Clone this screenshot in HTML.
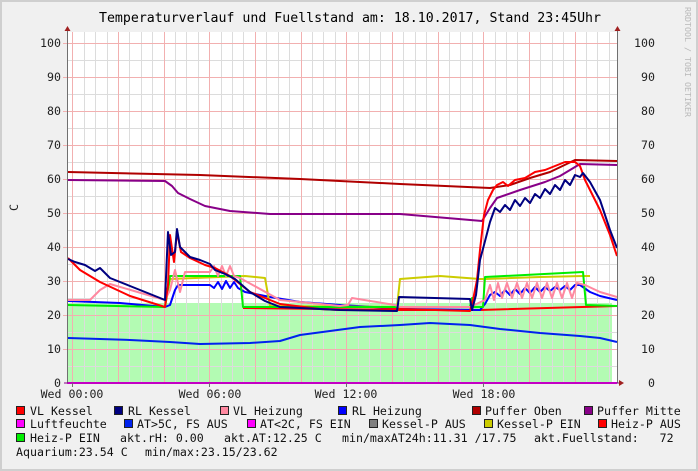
<!DOCTYPE html>
<html><head><meta charset="utf-8"><style>
html,body{margin:0;padding:0;background:#f0f0f0;}
svg{display:block;font-family:"DejaVu Sans Mono","Liberation Mono",monospace;}
</style></head><body>
<svg width="698" height="471" viewBox="0 0 698 471" xmlns="http://www.w3.org/2000/svg">
<rect x="0" y="0" width="698" height="471" fill="#f0f0f0"/>
<rect x="1" y="1" width="696" height="469" fill="none" stroke="#cfcfcf" stroke-width="2"/>
<text x="350" y="22" font-size="13.3" text-anchor="middle" fill="#000" textLength="502" lengthAdjust="spacingAndGlyphs">Temperaturverlauf und Fuellstand am: 18.10.2017, Stand 23:45Uhr</text>
<text transform="translate(685,7) rotate(90)" font-size="8" fill="#b8b8b8" textLength="110" lengthAdjust="spacingAndGlyphs">RRDTOOL / TOBI OETIKER</text>
<!-- plot -->
<rect x="67" y="32" width="550" height="351" fill="#ffffff"/>
<!-- green fill -->
<rect x="68" y="303" width="544" height="80" fill="#b3fbb3"/>
<g stroke="#dcdcdc" stroke-width="1" id="mg">
<path d="M84.5 32V383M95.5 32V383M107.5 32V383M129.5 32V383M141.5 32V383M152.5 32V383M175.5 32V383M186.5 32V383M198.5 32V383M221.5 32V383M232.5 32V383M243.5 32V383M266.5 32V383M278.5 32V383M289.5 32V383M312.5 32V383M323.5 32V383M335.5 32V383M358.5 32V383M369.5 32V383M380.5 32V383M403.5 32V383M415.5 32V383M426.5 32V383M449.5 32V383M460.5 32V383M472.5 32V383M495.5 32V383M506.5 32V383M517.5 32V383M540.5 32V383M552.5 32V383M563.5 32V383M586.5 32V383M597.5 32V383M609.5 32V383"/>
<path d="M67 366.5H617M67 332.5H617M67 298.5H617M67 264.5H617M67 230.5H617M67 196.5H617M67 162.5H617M67 128.5H617M67 94.5H617M67 60.5H617"/>
</g>
<g stroke="#f2b0b0" stroke-width="1">
<path d="M72.5 32V383M118.5 32V383M164.5 32V383M209.5 32V383M255.5 32V383M301.5 32V383M346.5 32V383M392.5 32V383M438.5 32V383M483.5 32V383M529.5 32V383M575.5 32V383"/>
<path d="M63 349.5H617M63 315.5H617M63 281.5H617M63 247.5H617M63 213.5H617M63 179.5H617M63 145.5H617M63 111.5H617M63 77.5H617M63 43.5H617"/>
</g>
<g fill="none" stroke-width="2" stroke-linejoin="round">
<!-- AT outdoor -->
<polyline stroke="#0022ee" points="68,338 100,339 130,340 170,342 200,344 250,343 280,341 300,335 330,331 360,327 400,325 430,323 470,325 500,329 540,333 580,336 600,338 617,342"/>
<!-- Heiz-P AUS red low -->
<polyline stroke="#ff0000" points="243,308 400,310 470,310 480,310 617,306"/>
<!-- RL Heizung -->
<polyline stroke="#0000ff" points="68,301 120,303 165,307 170,305 175,290 178,285 210,285 214,288 218,282 222,289 226,281 230,288 234,282 238,288 245,292 270,297 300,302 340,305 390,308 400,309 480,310 485,304 490,295 495,292 500,296 505,290 510,295 515,289 520,294 525,288 530,293 535,287 540,292 545,287 550,291 555,287 560,290 565,286 570,290 575,285 580,285 590,292 600,296 617,300"/>
<!-- Kessel-P EIN yellow -->
<polyline stroke="#cccc00" points="165,307 170,279 245,276 265,278 270,306 397,307 400,279 440,276 480,279 485,279 540,277 583,276 590,276"/>
<!-- Heiz-P EIN green -->
<polyline stroke="#00ee00" points="68,305 165,307 170,276 240,276 243,307 470,307 472,298 474,307 483,307 485,277 583,272 586,305 617,306"/>
<!-- VL Heizung pink -->
<polyline stroke="#ff88a0" points="68,300 90,300 100,290 110,284 165,300 170,290 175,270 180,292 185,272 210,272 214,266 218,276 222,266 226,276 230,266 234,276 240,278 280,300 340,306 348,305 352,298 395,305 400,307 470,307 485,300 490,285 494,300 498,283 502,298 507,283 512,298 517,283 522,298 527,283 532,298 537,283 542,298 547,283 552,298 557,283 562,298 567,283 572,298 577,283 585,285 600,292 617,297"/>
<!-- Puffer Oben -->
<polyline stroke="#b00000" points="68,172 200,175 300,179 400,184 490,188 510,185 530,178 550,172 575,160 617,161"/>
<!-- Puffer Mitte -->
<polyline stroke="#880088" points="68,180 165,181 172,186 178,193 190,199 205,206 230,211 270,214 400,214 482,221 490,208 497,198 520,190 545,182 560,176 580,164 617,165"/>
<!-- VL Kessel red -->
<polyline stroke="#ff0000" points="68,258 80,270 100,282 130,296 165,307 168,285 170,235 174,262 177,232 181,252 190,258 205,265 215,268 230,276 250,292 280,304 320,309 340,310 397,309 400,309 470,311 473,300 477,280 480,250 484,215 488,200 493,190 497,185 503,182 508,186 515,180 525,178 535,172 545,170 555,166 565,162 575,162 580,166 585,180 590,190 600,210 610,235 617,256"/>
<!-- RL Kessel navy -->
<polyline stroke="#000080" points="68,259 75,262 85,265 95,271 100,268 110,278 130,286 150,294 165,300 168,232 171,255 175,252 177,229 180,247 190,257 200,260 210,264 215,270 225,274 235,279 250,292 265,301 280,307 320,309 340,310 397,311 399,297 470,299 472,310 476,295 480,260 484,245 490,222 495,208 500,212 505,205 510,210 515,200 520,206 525,198 530,203 535,194 540,198 545,189 550,194 555,185 560,190 565,180 570,185 575,175 580,177 583,173 590,182 600,200 610,230 617,248"/>
<!-- Luftfeuchte 0 -->
<polyline stroke="#ff00ff" points="67,383 617,383"/>
</g>
<!-- axes -->
<path d="M67.5 383V30M617.5 383V30" stroke="#707070" stroke-width="1"/>
<path d="M64 383H620" stroke="#880088" stroke-width="1"/>
<path d="M64.5 31L67.5 26L70.5 31Z M614.5 31L617.5 26L620.5 31Z M619 380L624 383L619 386Z" fill="#a02020"/>
<path d="M72.5 383v4M209.5 383v4M346.5 383v4M483.5 383v4" stroke="#707070"/>
<g font-size="11.6" fill="#222" text-anchor="end">
<text x="61" y="47">100</text><text x="61" y="81">90</text><text x="61" y="115">80</text><text x="61" y="149">70</text><text x="61" y="183">60</text><text x="61" y="217">50</text><text x="61" y="251">40</text><text x="61" y="285">30</text><text x="61" y="319">20</text><text x="61" y="353">10</text><text x="61" y="387">0</text>
<text x="655" y="47">100</text><text x="655" y="81">90</text><text x="655" y="115">80</text><text x="655" y="149">70</text><text x="655" y="183">60</text><text x="655" y="217">50</text><text x="655" y="251">40</text><text x="655" y="285">30</text><text x="655" y="319">20</text><text x="655" y="353">10</text><text x="655" y="387">0</text>
</g>
<text transform="translate(18,211) rotate(-90)" font-size="11.6" fill="#222">C</text>
<g font-size="11.6" fill="#222" text-anchor="middle">
<text x="72" y="398">Wed 00:00</text><text x="210" y="398">Wed 06:00</text><text x="346" y="398">Wed 12:00</text><text x="484" y="398">Wed 18:00</text>
</g>
<!-- legend -->
<g stroke="#222" stroke-width="1">
<rect x="16.5" y="406.5" width="8" height="8" fill="#ff0000"/>
<rect x="114.5" y="406.5" width="8" height="8" fill="#000080"/>
<rect x="220.5" y="406.5" width="8" height="8" fill="#ff88a0"/>
<rect x="338.5" y="406.5" width="8" height="8" fill="#0000ff"/>
<rect x="472.5" y="406.5" width="8" height="8" fill="#b00000"/>
<rect x="584.5" y="406.5" width="8" height="8" fill="#880088"/>
<rect x="16.5" y="419.5" width="8" height="8" fill="#ff00ff"/>
<rect x="124.5" y="419.5" width="8" height="8" fill="#0022ee"/>
<rect x="247.5" y="419.5" width="8" height="8" fill="#ff00ff"/>
<rect x="369.5" y="419.5" width="8" height="8" fill="#808080"/>
<rect x="484.5" y="419.5" width="8" height="8" fill="#cccc00"/>
<rect x="598.5" y="419.5" width="8" height="8" fill="#ff0000"/>
<rect x="16.5" y="433.5" width="8" height="8" fill="#00ee00"/>
</g>
<g font-size="11.6" fill="#111">
<text x="30" y="415">VL Kessel</text><text x="128" y="415">RL Kessel</text><text x="233" y="415">VL Heizung</text><text x="352" y="415">RL Heizung</text><text x="485" y="415">Puffer Oben</text><text x="597" y="415">Puffer Mitte</text>
<text x="30" y="428">Luftfeuchte</text><text x="137" y="428">AT&gt;5C, FS AUS</text><text x="260" y="428">AT&lt;2C, FS EIN</text><text x="382" y="428">Kessel-P AUS</text><text x="497" y="428">Kessel-P EIN</text><text x="611" y="428">Heiz-P AUS</text>
<text x="30" y="442">Heiz-P EIN</text><text x="120" y="442">akt.rH: 0.00</text><text x="224" y="442">akt.AT:12.25 C</text><text x="342" y="442">min/maxAT24h:11.31 /17.75</text><text x="534" y="442" xml:space="preserve">akt.Fuellstand:   72</text>
<text x="16" y="456">Aquarium:23.54 C</text><text x="145" y="456">min/max:23.15/23.62</text>
</g>
</svg>
</body></html>
